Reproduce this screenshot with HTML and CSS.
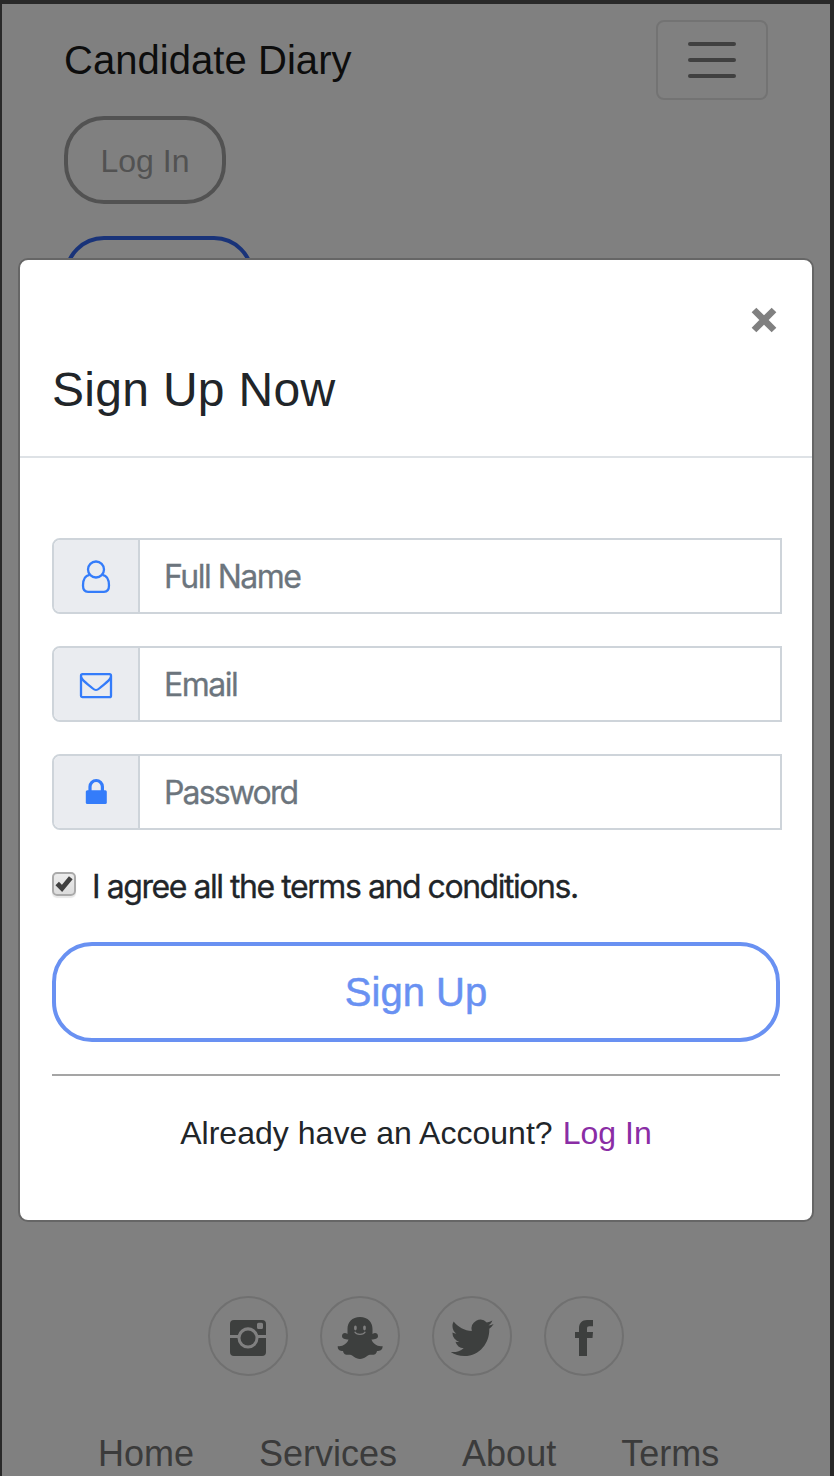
FILE: index.html
```html
<!DOCTYPE html>
<html lang="en">
<head>
<meta charset="utf-8">
<title>Candidate Diary</title>
<link rel="stylesheet" href="styles.css">
</head>
<body>
<div class="page">
  <header class="header">
    <nav class="navbar">
      <a class="brand">Candidate Diary</a>
      <button class="toggler" aria-label="Menu"><span></span><span></span><span></span></button>
    </nav>
    <a class="pill pill-login">Log In</a>
    <a class="pill pill-signup"></a>
  </header>
  <footer class="footer">
    <div class="social">
      <a class="circle"><svg viewBox="0 0 80 80"><path fill-rule="evenodd" d="M26 24H54a4 4 0 0 1 4 4V39H50.1A10.5 10.5 0 0 0 29.9 39H22V28a4 4 0 0 1 4-4ZM50.5 26.8a1.5 1.5 0 0 0-1.5 1.5V31.500a1.500 1.500 0 0 0 1.500 1.500H53.500a1.500 1.500 0 0 0 1.500-1.500V28.300a1.500 1.500 0 0 0-1.500-1.500ZM22 42H29.500A10.500 10.500 0 0 0 50.500 42H58V56a4 4 0 0 1-4 4H26a4 4 0 0 1-4-4Z"/><circle cx="40" cy="42" r="7.500"/></svg></a>
      <a class="circle"><svg viewBox="0 0 80 80"><path d="M40 21C32 21 27.500 26 27.500 33V38C25 36.200 22 37.200 22 40C22 42.700 25 43.500 28.500 43.500C27 48 22 51 17.800 50C17.300 54 20 54.800 23 55C24 59.500 27 58.800 30 58.800C33 59 35 63 40 63C45 63 47 59 50 58.800C53 58.800 56 59.500 57 55C60 54.800 63 54 62.500 50C58 51 53 48 51.500 43.500C55 43.500 58 42.700 58 40C58 37.200 55 36.200 52.500 38V33C52.500 26 48 21 40 21Z"/><g class="cutout"><ellipse cx="35.400" cy="32" rx="1.400" ry="2.400"/><ellipse cx="44.500" cy="32" rx="1.400" ry="2.400"/><path class="smile" d="M34.700 35.800C36.500 39.300 43.500 39.300 45.300 35.800"/></g></svg></a>
      <a class="circle"><svg viewBox="0 0 80 80"><path transform="translate(18.700 19.500) scale(1.790 1.865)" d="M23.953 4.570a10 10 0 0 1-2.825.775 4.958 4.958 0 0 0 2.163-2.723c-.951.555-2.005.959-3.127 1.184a4.920 4.920 0 0 0-8.384 4.482C7.690 8.095 4.067 6.130 1.640 3.162a4.822 4.822 0 0 0-.666 2.475c0 1.710.870 3.213 2.188 4.096a4.904 4.904 0 0 1-2.228-.616v.060a4.923 4.923 0 0 0 3.946 4.827 4.996 4.996 0 0 1-2.212.085 4.936 4.936 0 0 0 4.604 3.417 9.867 9.867 0 0 1-6.102 2.105c-.390 0-.779-.023-1.170-.067a13.995 13.995 0 0 0 7.557 2.209c9.053 0 13.998-7.496 13.998-13.985 0-.210 0-.420-.015-.630A9.935 9.935 0 0 0 24 4.590z"/></svg></a>
      <a class="circle"><svg viewBox="0 0 80 80"><path d="M35 60V42H31V36H35V32.500C35 27 38 24 43 24H49V30.300H45.500C43.500 30.300 43 31 43 33V36H49L48.500 42H43V60Z"/></svg></a>
    </div>
    <nav class="links"><a>Home</a><a>Services</a><a>About</a><a>Terms</a></nav>
  </footer>
</div>

<div class="modal">
  <div class="modal-header">
    <button class="close" aria-label="Close"><svg viewBox="0 0 28 28"><path d="M4 4L24 24M24 4L4 24"/></svg></button>
    <h2 class="title">Sign Up Now</h2>
  </div>
  <form class="modal-body">
    <div class="field">
      <span class="addon"><svg viewBox="0 0 36 36"><circle cx="18" cy="11.500" r="8"/><path d="M11.500 16.800C7 17.500 5 22 5 27.500C5 31.500 7 33.800 10 33.800H26C29 33.800 31 31.500 31 27.500C31 22 29 17.500 24.500 16.800"/></svg></span>
      <span class="input">Full Name</span>
    </div>
    <div class="field">
      <span class="addon"><svg viewBox="0 0 36 36"><rect x="3" y="8.200" width="30" height="23" rx="1.500"/><path d="M3 11C4.500 15 9 17.500 14.800 22.500C17.300 24.700 18.700 24.700 21.200 22.500C27 17.500 31.500 15 33 11"/></svg></span>
      <span class="input">Email</span>
    </div>
    <div class="field">
      <span class="addon"><svg viewBox="0 0 36 36"><rect class="solid" x="7.800" y="16.300" width="21" height="13.700" rx="1.500"/><path class="shackle" d="M12 17V12.700a6.200 6.200 0 0 1 12.400 0V17"/></svg></span>
      <span class="input input-password">Password</span>
    </div>
    <label class="agree">
      <span class="check"><svg viewBox="0 0 24 24"><path d="M5.200 11.500L10 16.500L18.800 5.800"/></svg></span>
      <span class="agree-text">I agree all the terms and conditions.</span>
    </label>
    <div class="submit">Sign Up</div>
    <div class="rule"></div>
    <p class="account"><span>Already have an Account?</span><a class="login">Log In</a></p>
  </form>
</div>
</body>
</html>
```
FILE: styles.css
```css
* { box-sizing: border-box; }
body {
  margin: 0;
  height: 1476px;
  overflow: hidden;
  position: relative;
  font-family: "Liberation Sans", Arial, sans-serif;
  color: #212529;
  white-space: nowrap;
}
svg { display: block; }
button { padding: 0; background: none; }

.page {
  height: 1476px;
  border: solid #292929;
  border-width: 4px 4px 0 2px;
  background: #808080;
  display: flex;
  flex-direction: column;
  justify-content: space-between;
}
.header {
  display: flex;
  flex-direction: column;
  align-items: flex-start;
  padding: 16px 62px 0;
}
.navbar {
  width: 704px;
  height: 80px;
  display: flex;
  align-items: center;
  justify-content: space-between;
}
.brand { font-size: 40px; line-height: 80px; color: #0d0d0d; letter-spacing: 0.05px; }
.toggler {
  width: 112px;
  height: 80px;
  border: 2px solid #737373;
  border-radius: 8px;
  display: flex;
  flex-direction: column;
  align-items: center;
  justify-content: center;
  gap: 12px;
}
.toggler span { width: 48px; height: 4px; border-radius: 2px; background: #404040; }
.pill {
  height: 88px;
  border: 4px solid #525252;
  border-radius: 40px;
  font-size: 32px;
  line-height: 83px;
  text-align: center;
}
.pill-login { width: 162px; margin-top: 16px; color: #525252; }
.pill-signup { width: 190px; margin-top: 32px; border-color: #193379; }

.footer { display: flex; flex-direction: column; align-items: flex-start; }
.social { display: flex; gap: 32px; padding-left: 206px; }
.circle { width: 80px; height: 80px; border: 2px solid #707070; border-radius: 50%; }
.circle svg { width: 80px; height: 80px; margin: -2px; fill: #3d3f3e; }
.cutout { fill: #808080; }
.smile { fill: none; stroke: #808080; stroke-width: 1.2; }
.links {
  display: flex;
  gap: 65px;
  height: 42px;
  margin-top: 58px;
  padding-left: 96px;
  font-size: 36px;
  line-height: 40px;
  color: #3b3b3b;
}

.modal {
  position: absolute;
  left: 18px;
  top: 258px;
  width: 796px;
  height: 964px;
  border: 2px solid #666;
  border-radius: 10px;
  background: #fff;
}
.modal-header {
  height: 198px;
  padding: 46px 32px 0;
  border-bottom: 2px solid #dee2e6;
}
.close { display: block; width: 28px; height: 28px; margin-left: auto; margin-right: 2.5px; border: 0; }
.close svg { width: 28px; height: 28px; stroke: #808080; stroke-width: 6.6; }
.title { margin: 27px 0 0; font-size: 48px; line-height: 58px; font-weight: 400; letter-spacing: 0.3px; }
.modal-body { padding: 80px 30px 0 32px; }
.field { display: flex; width: 730px; height: 76px; margin-bottom: 32px; border: 2px solid #ced4da; border-radius: 8px 0 0 8px; }
.addon {
  width: 86px;
  padding-right: 0;
  border-right: 2px solid #ced4da;
  border-radius: 6px 0 0 6px;
  background: #eaecf0;
  display: flex;
  align-items: center;
  justify-content: center;
}
.addon svg { width: 36px; height: 36px; fill: none; stroke: #347cfa; stroke-width: 2.3; }
.addon .solid { fill: #347cfa; stroke: none; }
.addon .shackle { stroke-width: 3.2; }
.input {
  padding-left: 24px;
  font-family: Inter, sans-serif;
  font-size: 32px;
  line-height: 74px;
  color: #6c757d;
  letter-spacing: -1.5px;
  -webkit-text-stroke: 0.3px currentColor;
}
.input-password { letter-spacing: -1.85px; }
.agree { display: flex; align-items: flex-start; height: 48px; margin-top: 32px; }
.check {
  width: 24px;
  height: 24px;
  margin: 10px 16px 0 0;
  border: 2px solid #aaa;
  border-radius: 5px;
  background: linear-gradient(#ececec, #dcdcdc);
  box-shadow: 0 2px 1px #e8e8e8;
}
.check svg { width: 24px; height: 24px; margin: -2px; fill: none; stroke: #404040; stroke-width: 4.8; }
.agree-text {
  font-family: Inter, sans-serif;
  font-size: 32px;
  line-height: 50px;
  letter-spacing: -1.45px;
  -webkit-text-stroke: 0.3px currentColor;
}
.submit {
  width: 728px;
  height: 100px;
  margin-top: 32px;
  border: 4px solid #6991f2;
  border-radius: 40px;
  color: #6991f2;
  font-size: 40px;
  line-height: 93px;
  text-align: center;
  -webkit-text-stroke: 0.5px currentColor;
}
.rule { width: 728px; height: 2px; margin-top: 32px; background: #a5a5a5; }
.account { display: flex; justify-content: center; gap: 10px; width: 728px; margin: 33px 0 0; font-size: 32px; line-height: 49px; letter-spacing: 0.03px; }
.login { color: #8a2da5; }
```
